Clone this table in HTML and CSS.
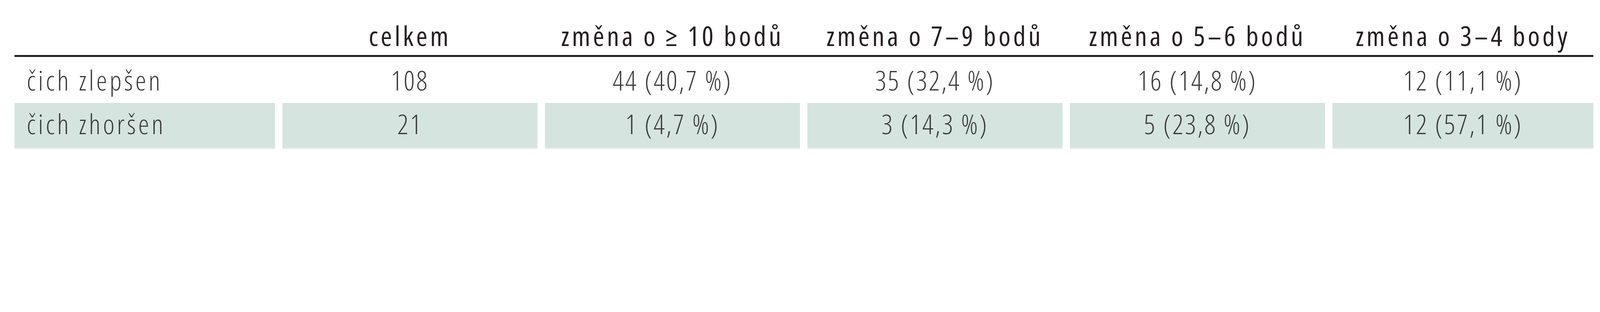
FILE: index.html
```html
<!DOCTYPE html>
<html lang="cs">
<head>
<meta charset="utf-8">
<link rel="stylesheet" href="styles.css">
</head>
<body>
<div class="table">
  <div class="row head">
    <div class="cell label"></div>
    <div class="cell">celkem</div>
    <div class="cell">změna o ≥ 10 bodů</div>
    <div class="cell">změna o 7–9 bodů</div>
    <div class="cell">změna o 5–6 bodů</div>
    <div class="cell">změna o 3–4 body</div>
  </div>
  <div class="row body">
    <div class="cell label">čich zlepšen</div>
    <div class="cell num">108</div>
    <div class="cell num">44 (40,7 %)</div>
    <div class="cell num">35 (32,4 %)</div>
    <div class="cell num">16 (14,8 %)</div>
    <div class="cell num">12 (11,1 %)</div>
  </div>
  <div class="row body striped">
    <div class="cell label">čich zhoršen</div>
    <div class="cell num">21</div>
    <div class="cell num">1 (4,7 %)</div>
    <div class="cell num">3 (14,3 %)</div>
    <div class="cell num">5 (23,8 %)</div>
    <div class="cell num">12 (57,1 %)</div>
  </div>
</div>
</body>
</html>
```
FILE: styles.css
```css
:root {
  /* one pixel of the 7656px-wide reference frame */
  --u: calc(100vw / 7656);
}

html, body {
  margin: 0;
  background: #ffffff;
}

.table {
  margin-left: calc(70 * var(--u));
  width: calc(7555 * var(--u));
  font-family: "Open Sans", "Noto Sans", sans-serif;
  font-stretch: 75%;
  font-size: calc(131 * var(--u));
  white-space: nowrap;
}

.row {
  display: grid;
  grid-template-columns:
    calc(1246 * var(--u))
    calc(1221 * var(--u))
    calc(1221 * var(--u))
    calc(1221 * var(--u))
    calc(1221 * var(--u))
    calc(1250 * var(--u));
  column-gap: calc(35 * var(--u));
}

.cell {
  text-align: center;
  letter-spacing: 0.095em;
}

.cell.num {
  letter-spacing: 0.055em;
}

.cell.label {
  text-align: left;
  padding-left: calc(58 * var(--u));
  letter-spacing: 0.09em;
}

.head {
  border-bottom: calc(11 * var(--u)) solid #231f20;
}

.head .cell {
  font-weight: 400;
  color: #231f20;
  padding-top: calc(83 * var(--u));
  padding-bottom: calc(2 * var(--u));
  line-height: calc(178 * var(--u));
}

.body .cell {
  font-weight: 300;
  color: #3a3a3a;
  height: calc(222 * var(--u));
  line-height: calc(222 * var(--u));
}

.striped .cell {
  background: #d5e4df;
  height: calc(213 * var(--u));
  line-height: calc(200 * var(--u));
  border-bottom: calc(9 * var(--u)) solid #e2ecea;
}
```
